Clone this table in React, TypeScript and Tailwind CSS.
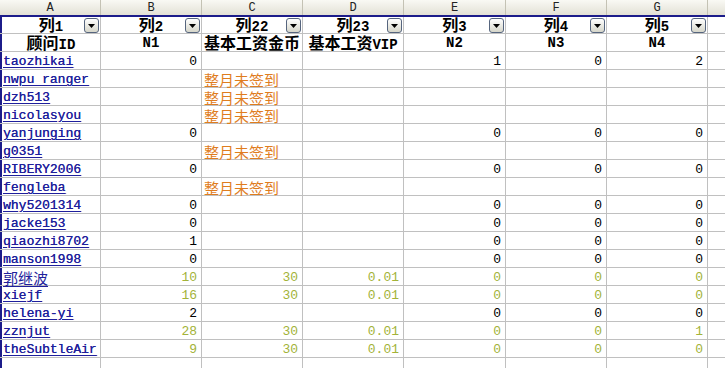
import React from "react";

const W = ["w-[101px]", "w-[101px]", "w-[101px]", "w-[101px]", "w-[102px]", "w-[101px]", "w-[101px]"];
const LETTERS = ["A", "B", "C", "D", "E", "F", "G"];

type Row = { id: string; cjk?: boolean; b?: string; c?: boolean; c30?: boolean; e?: string; f?: string; g?: string; green?: boolean };

const rows: Row[] = [
  { id: "taozhikai", b: "0", e: "1", f: "0", g: "2" },
  { id: "nwpu ranger", c: true },
  { id: "dzh513", c: true },
  { id: "nicolasyou", c: true },
  { id: "yanjunging", b: "0", e: "0", f: "0", g: "0" },
  { id: "g0351", c: true },
  { id: "RIBERY2006", b: "0", e: "0", f: "0", g: "0" },
  { id: "fengleba", c: true },
  { id: "why5201314", b: "0", e: "0", f: "0", g: "0" },
  { id: "jacke153", b: "0", e: "0", f: "0", g: "0" },
  { id: "qiaozhi8702", b: "1", e: "0", f: "0", g: "0" },
  { id: "manson1998", b: "0", e: "0", f: "0", g: "0" },
  { id: "郭继波", cjk: true, b: "10", c30: true, e: "0", f: "0", g: "0", green: true },
  { id: "xiejf", b: "16", c30: true, e: "0", f: "0", g: "0", green: true },
  { id: "helena-yi", b: "2", e: "0", f: "0", g: "0" },
  { id: "zznjut", b: "28", c30: true, e: "0", f: "0", g: "1", green: true },
  { id: "theSubtleAir", b: "9", c30: true, e: "0", f: "0", g: "0", green: true },
];

function Drop() {
  return (
    <div className="absolute right-[1px] top-[1px] w-[15px] h-[15px] rounded-[3px] border border-[#56657e] bg-gradient-to-b from-[#ffffff] to-[#d6d6ca] flex items-center justify-center">
      <svg width="7" height="4" viewBox="0 0 7 4"><path d="M0 0H7L3.5 4Z" fill="#000" /></svg>
    </div>
  );
}

function Cell({ i, children, className = "", first = false }: { i: number; children?: React.ReactNode; className?: string; first?: boolean }) {
  return (
    <div className={`${W[i]} shrink-0 h-full border-r border-[#c0c0c0] overflow-visible whitespace-nowrap ${first ? "border-l-2 border-l-[#1c1c8a]" : ""} ${className}`}>
      {children}
    </div>
  );
}

const cjk = "font-['Noto_Sans_CJK_SC',sans-serif]";

function Head({ c, l }: { c?: string; l?: string }) {
  return (
    <span className="leading-[16px] whitespace-nowrap pt-[2px]">
      {c ? <span className={`${cjk} text-[16px] font-bold`}>{c}</span> : null}
      {l ? <span className="text-[14px] font-bold">{l}</span> : null}
    </span>
  );
}

export default function App() {
  return (
    <div className="w-[725px] h-[368px] overflow-hidden bg-white font-['Liberation_Mono','Noto_Sans_CJK_SC',monospace] text-[13px] text-black">
      {/* column letters */}
      <div className="flex h-[15px] bg-gradient-to-b from-[#f9f9f4] to-[#e3e1d6]">
        {LETTERS.map((l, i) => (
          <div key={l} className={`${W[i]} shrink-0 h-full border-r border-[#c4c2b4] flex items-center justify-center text-[12px] leading-none text-[#222]`}>{l}</div>
        ))}
        <div className="flex-1" />
      </div>
      <div className="h-[2px] bg-[#1c1c8a]" />
      {/* row 1 */}
      <div className="flex h-[17px] border-b border-[#c0c0c0]">
        {["列1", "列2", "列22", "列23", "列3", "列4", "列5"].map((t, i) => (
          <Cell key={t} i={i} first={i === 0} className="relative flex items-center justify-center">
            <Head c={t.slice(0, 1)} l={t.slice(1)} />
            <Drop />
          </Cell>
        ))}
        <div className="flex-1" />
      </div>
      {/* row 2 */}
      <div className="flex h-[18px] border-b border-[#c0c0c0]">
        <Cell i={0} first className="flex items-center justify-center"><Head c="顾问" l="ID" /></Cell>
        <Cell i={1} className="flex items-center justify-center"><Head l="N1" /></Cell>
        <Cell i={2} className="flex items-center justify-center"><Head c="基本工资金币" /></Cell>
        <Cell i={3} className="flex items-center justify-center"><Head c="基本工资" l="VIP" /></Cell>
        <Cell i={4} className="flex items-center justify-center"><Head l="N2" /></Cell>
        <Cell i={5} className="flex items-center justify-center"><Head l="N3" /></Cell>
        <Cell i={6} className="flex items-center justify-center"><Head l="N4" /></Cell>
        <div className="flex-1" />
      </div>
      {rows.map((r) => {
        const num = r.green ? "text-[#a3b339]" : "text-black";
        return (
          <div key={r.id} className="flex h-[18px] border-b border-[#c0c0c0] leading-[20px]">
            <Cell i={0} first className={`pl-[1px] text-[#1f1f9c] underline underline-offset-2 ${r.cjk ? "" : "[text-shadow:0.25px_0_0_currentColor]"}`}>
              {r.cjk ? <span className={`${cjk} text-[15px]`}>{r.id}</span> : r.id}
            </Cell>
            <Cell i={1} className={`text-right pr-[4px] ${num}`}>{r.b}</Cell>
            <Cell i={2} className={`pl-[2px] ${r.c30 ? "text-right pr-[4px] " + num : ""}`}>
              {r.c ? <span className={`${cjk} text-[15px] text-[#df7d1e]`}>整月未签到</span> : r.c30 ? "30" : null}
            </Cell>
            <Cell i={3} className={`text-right pr-[4px] ${num}`}>{r.c30 ? "0.01" : null}</Cell>
            <Cell i={4} className={`text-right pr-[4px] ${num}`}>{r.e}</Cell>
            <Cell i={5} className={`text-right pr-[4px] ${num}`}>{r.f}</Cell>
            <Cell i={6} className={`text-right pr-[4px] ${num}`}>{r.g}</Cell>
            <div className="flex-1" />
          </div>
        );
      })}
      <div className="flex h-[18px] border-b border-[#c0c0c0]">
        {W.map((_, i) => <Cell key={i} i={i} first={i === 0} />)}
        <div className="flex-1" />
      </div>
    </div>
  );
}
